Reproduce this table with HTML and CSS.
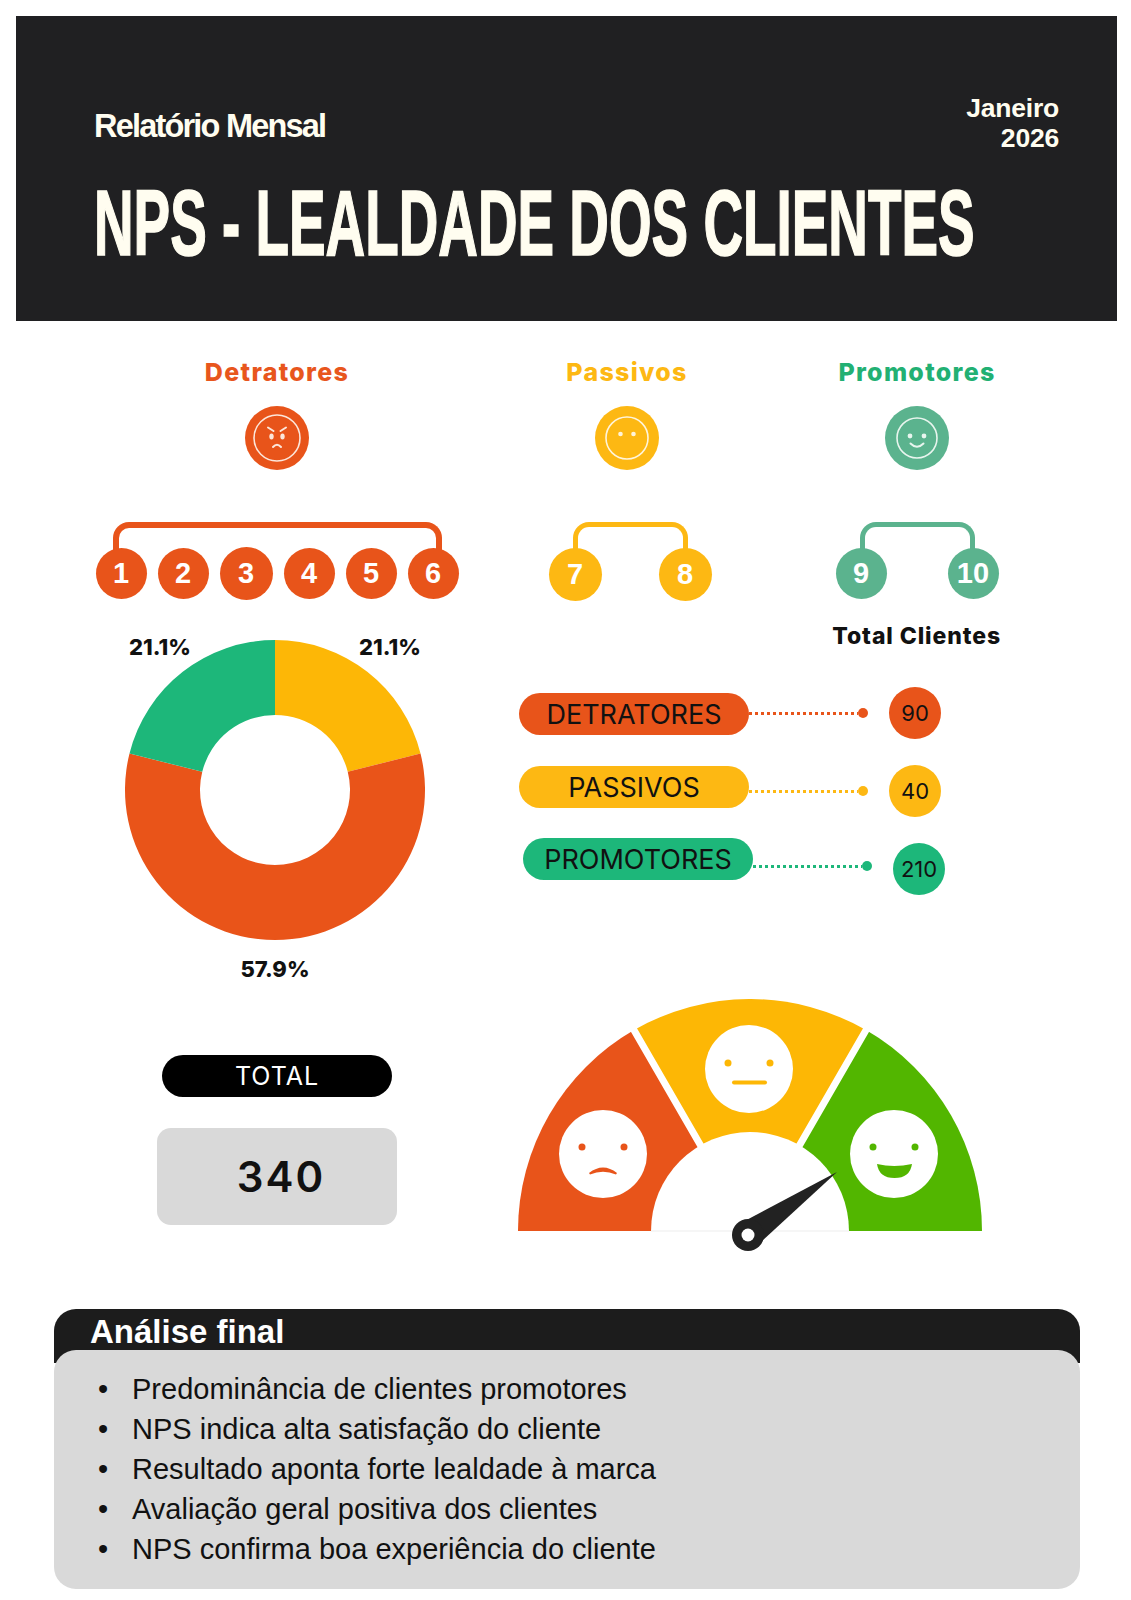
FILE: index.html
```html
<!DOCTYPE html>
<html lang="pt">
<head>
<meta charset="utf-8">
<title>NPS - Lealdade dos Clientes</title>
<link rel="stylesheet" href="styles.css">
</head>
<body>
<div class="page">
  <header class="hero">
    <div class="hero-top">
      <div class="kicker">Relatório Mensal</div>
      <div class="date"><div>Janeiro</div><div>2026</div></div>
    </div>
    <h1 class="title"><span>NPS - LEALDADE DOS CLIENTES</span></h1>
  </header>

  <section class="groups">
    <div class="group g-det">
      <h2 class="g-title">Detratores</h2>
      <svg class="face-icon" viewBox="0 0 64 64" width="64" height="64">
        <circle cx="32" cy="32" r="32" fill="#E8541A"/>
        <circle cx="32" cy="32" r="23" fill="none" stroke="#FCE6DA" stroke-width="1.6"/>
        <path d="M23 21.5 L28.5 25 M41 21.5 L35.5 25" stroke="#FCE6DA" stroke-width="2" stroke-linecap="round"/>
        <ellipse cx="26.5" cy="30.5" rx="2.2" ry="3" fill="#FCE6DA"/>
        <ellipse cx="37.5" cy="30.5" rx="2.2" ry="3" fill="#FCE6DA"/>
        <path d="M28 41 Q32 36.5 36 41" fill="none" stroke="#FCE6DA" stroke-width="2" stroke-linecap="round"/>
      </svg>
      <div class="scale">
        <div class="bracket b-det"></div>
        <div class="nums n-det">
          <span class="num">1</span><span class="num">2</span><span class="num">3</span><span class="num">4</span><span class="num">5</span><span class="num">6</span>
        </div>
      </div>
    </div>

    <div class="group g-pas">
      <h2 class="g-title">Passivos</h2>
      <svg class="face-icon" viewBox="0 0 64 64" width="64" height="64">
        <circle cx="32" cy="32" r="32" fill="#FDB813"/>
        <circle cx="32" cy="32" r="21" fill="none" stroke="#FFF4DA" stroke-width="1.6"/>
        <circle cx="25.5" cy="28" r="2.3" fill="#FFF4DA"/>
        <circle cx="38.5" cy="28" r="2.3" fill="#FFF4DA"/>
      </svg>
      <div class="scale">
        <div class="bracket b-pas"></div>
        <div class="nums n-pas">
          <span class="num">7</span><span class="num">8</span>
        </div>
      </div>
    </div>

    <div class="group g-pro">
      <h2 class="g-title">Promotores</h2>
      <svg class="face-icon" viewBox="0 0 64 64" width="64" height="64">
        <circle cx="32" cy="32" r="32" fill="#5BB38E"/>
        <circle cx="32" cy="32" r="20" fill="none" stroke="#E8F5EE" stroke-width="1.6"/>
        <circle cx="25" cy="30" r="2.4" fill="#E8F5EE"/>
        <circle cx="39" cy="30" r="2.4" fill="#E8F5EE"/>
        <path d="M25.5 37.5 Q32 44 38.5 37.5" fill="none" stroke="#E8F5EE" stroke-width="2" stroke-linecap="round"/>
      </svg>
      <div class="scale">
        <div class="bracket b-pro"></div>
        <div class="nums n-pro">
          <span class="num">9</span><span class="num">10</span>
        </div>
      </div>
    </div>
  </section>

  <section class="stats">
    <div class="donut-wrap">
      <svg class="donut" viewBox="0 0 300 300" width="300" height="300">
        <path d="M150,0 A150,150 0 0 1 295.5,113.53 L222.75,131.77 A75,75 0 0 0 150,75 Z" fill="#FDB706"/>
        <path d="M295.5,113.53 A150,150 0 1 1 4.5,113.53 L77.25,131.77 A75,75 0 1 0 222.75,131.77 Z" fill="#E95419"/>
        <path d="M4.5,113.53 A150,150 0 0 1 150,0 L150,75 A75,75 0 0 0 77.25,131.77 Z" fill="#1DB77A"/>
      </svg>
      <span class="pct pct-l">21.1%</span>
      <span class="pct pct-r">21.1%</span>
      <span class="pct pct-b">57.9%</span>
    </div>

    <div class="legend">
      <div class="legend-head">Total Clientes</div>
      <div class="legend-row det">
        <span class="pill">DETRATORES</span>
        <span class="conn"></span>
        <span class="val">90</span>
      </div>
      <div class="legend-row pas">
        <span class="pill">PASSIVOS</span>
        <span class="conn"></span>
        <span class="val">40</span>
      </div>
      <div class="legend-row pro">
        <span class="pill">PROMOTORES</span>
        <span class="conn"></span>
        <span class="val">210</span>
      </div>
    </div>
  </section>

  <section class="summary">
    <div class="total">
      <div class="total-pill">TOTAL</div>
      <div class="total-box">340</div>
    </div>
    <div class="gauge">
      <svg viewBox="0 0 470 256" width="470" height="256">
        <path d="M235,232 L3,232 A232,232 0 0 1 119,31.08 Z" fill="#E8541A"/>
        <path d="M235,232 L119,31.08 A232,232 0 0 1 351,31.08 Z" fill="#FDB705"/>
        <path d="M235,232 L351,31.08 A232,232 0 0 1 467,232 Z" fill="#52B600"/>
        <path d="M235,232 L113,20.7 M235,232 L357,20.7" stroke="#fff" stroke-width="7"/>
        <path d="M136,232 A99,99 0 0 1 334,232 Z" fill="#fff"/>
        <line x1="136" y1="232" x2="334" y2="232" stroke="#EDEDED" stroke-width="1"/>

        <g transform="translate(88 155)">
          <circle r="44" fill="#fff"/>
          <circle cx="-21" cy="-7" r="3.5" fill="#E8541A"/>
          <circle cx="21" cy="-7" r="3.5" fill="#E8541A"/>
          <path d="M-14,19 Q0,8 14,19 L13,20.5 Q0,15 -13,20.5 Z" fill="#E8541A"/>
        </g>
        <g transform="translate(234 70)">
          <circle r="44" fill="#fff"/>
          <circle cx="-21" cy="-6" r="3.5" fill="#FDB705"/>
          <circle cx="21" cy="-6" r="3.5" fill="#FDB705"/>
          <rect x="-17" y="11.5" width="35" height="4" rx="2" fill="#FDB705"/>
        </g>
        <g transform="translate(379 155)">
          <circle r="44" fill="#fff"/>
          <circle cx="-21" cy="-7" r="3.5" fill="#52B600"/>
          <circle cx="21" cy="-7" r="3.5" fill="#52B600"/>
          <path d="M-17,10 Q0,14 18,10 Q16,24 0.5,24 Q-15,24 -17,10 Z" fill="#52B600"/>
        </g>

        <path d="M224.9,224.6 L322,173 L241.1,247.4 Z" fill="#222"/>
        <circle cx="233" cy="236" r="16" fill="#222"/>
        <circle cx="233" cy="236" r="6.5" fill="#fff"/>
      </svg>
    </div>
  </section>

  <section class="analysis">
    <div class="analysis-head">Análise final</div>
    <ul class="analysis-body">
      <li>Predominância de clientes promotores</li>
      <li>NPS indica alta satisfação do cliente</li>
      <li>Resultado aponta forte lealdade à marca</li>
      <li>Avaliação geral positiva dos clientes</li>
      <li>NPS confirma boa experiência do cliente</li>
    </ul>
  </section>
</div>
</body>
</html>
```

FILE: styles.css
```css
* { box-sizing: border-box; }

body {
  margin: 0;
  background: #ffffff;
  font-family: Inter, "Liberation Sans", sans-serif;
  color: #111111;
}

.page {
  width: 1131px;
}

/* ---------- header ---------- */
.hero {
  margin: 16px 0 0 16px;
  width: 1101px;
  height: 305px;
  background: #202022;
  padding: 79px 58px 0 78px;
  overflow: hidden;
  color: #FFFDF0;
}

.hero-top {
  display: flex;
  justify-content: space-between;
  align-items: flex-start;
}

.kicker {
  margin-top: 15px;
  font: 700 32.5px/32px "Liberation Sans", Arial, sans-serif;
  letter-spacing: -1.8px;
}

.date {
  margin-top: -1px;
  font: 700 26.5px/29.8px "Liberation Sans", Arial, sans-serif;
  letter-spacing: -0.2px;
  text-align: right;
}

.title {
  margin: 22px 0 0;
  font: 700 93.6px/94px "Liberation Sans", Arial, sans-serif;
  white-space: nowrap;
}

.title span {
  display: inline-block;
  transform: scaleX(0.586);
  transform-origin: left center;
  -webkit-text-stroke: 1.6px #FFFDF0;
}

/* ---------- groups ---------- */
.groups {
  display: flex;
  margin-top: 36px;
  padding-left: 77px;
}

.group {
  display: flex;
  flex-direction: column;
  align-items: center;
}

.g-det { width: 400px; }
.g-pas { width: 220px; margin-left: 40px; }
.g-pro { width: 220px; margin-left: 70px; }

.g-title {
  margin: 0;
  font: 800 25px/30px Inter, sans-serif;
  letter-spacing: 1.3px;
}

.g-det .g-title { color: #E8561D; }
.g-pas .g-title { color: #FDB813; }
.g-pro .g-title { color: #22B073; }

.face-icon {
  display: block;
  margin-top: 19px;
}

.scale {
  margin-top: 52px;
  display: flex;
  flex-direction: column;
  align-items: center;
}

.bracket {
  height: 35px;
  border-style: solid;
  border-width: 5px 5px 0 5px;
  border-radius: 16px 16px 0 0;
}

.b-det { width: 329px; border-width: 6px 6px 0 6px; border-color: #E8541A; }
.b-pas { width: 115px; border-color: #FDB813; margin-left: 6px; }
.b-pro { width: 115px; border-color: #5BB38E; }

.nums {
  display: flex;
  margin-top: -9px;
}

.n-det { gap: 11px; }
.n-pas { gap: 57px; margin-left: 6px; }
.n-pro { gap: 61px; }

.num {
  width: 51px;
  height: 51px;
  border-radius: 50%;
  display: flex;
  align-items: center;
  justify-content: center;
  color: #ffffff;
  font: 700 29px/1 "Liberation Sans", Arial, sans-serif;
}

.n-det .num { background: #E8541A; }
.n-det .num:nth-child(3) { width: 53px; height: 53px; margin-top: -1px; }
.n-pas .num { background: #FDB813; width: 53px; height: 53px; }
.n-pro .num { background: #5BB38E; }

/* ---------- stats ---------- */
.stats {
  display: flex;
  margin-top: 21px;
  padding-left: 77px;
}

.donut-wrap {
  position: relative;
  width: 396px;
  height: 360px;
  padding-top: 18px;
}

.donut {
  display: block;
  margin: 0 auto;
}

.pct {
  position: absolute;
  transform: translate(-50%, -50%);
  font: 800 22px/1 Inter, sans-serif;
  color: #111111;
  white-space: nowrap;
}

.pct-l { left: 83px; top: 25px; }
.pct-r { left: 313px; top: 25px; }
.pct-b { left: 198px; top: 347px; }

.legend {
  margin-left: 46px;
  width: 482px;
  display: flex;
  flex-direction: column;
}

.legend-head {
  align-self: flex-end;
  font: 800 23px/28px Inter, sans-serif;
  letter-spacing: 0.9px;
  color: #111111;
}

.legend-row {
  display: flex;
  align-items: center;
  height: 52px;
}

.legend-row.det { margin-top: 37px; }
.legend-row.pas { margin-top: 26px; }
.legend-row.pro { margin-top: 26px; margin-left: 4px; }

.det .pill { margin-top: 2px; }
.pas .pill { margin-top: -8px; }
.pro .pill { margin-top: -20px; }

.pill {
  width: 230px;
  height: 42px;
  border-radius: 21px;
  display: flex;
  align-items: center;
  justify-content: center;
  font: 400 27px/1 Inter, sans-serif;
  color: #111111;
}

.conn {
  width: 119px;
  height: 10px;
  display: flex;
  align-items: center;
}

.pro .conn { margin-top: -6px; }

.conn::before {
  content: "";
  flex: 1;
  height: 3px;
  background: repeating-linear-gradient(90deg, currentColor 0 3px, transparent 3px 6px);
}

.conn::after {
  content: "";
  width: 10px;
  height: 10px;
  border-radius: 50%;
  background: currentColor;
}

.val {
  width: 52px;
  height: 52px;
  margin-left: 21px;
  border-radius: 50%;
  display: flex;
  align-items: center;
  justify-content: center;
  font: 400 22px/1 Inter, sans-serif;
  color: #111111;
}

.det .pill, .det .val { background: #E8541A; }
.det .conn { color: #E8541A; }
.pas .pill, .pas .val { background: #FDB813; }
.pas .conn { color: #FDB813; }
.pro .pill, .pro .val { background: #1DB77A; }
.pro .conn { color: #1DB77A; }

/* ---------- summary ---------- */
.summary {
  display: flex;
  margin-top: 17px;
  padding-left: 77px;
}

.total {
  width: 400px;
  display: flex;
  flex-direction: column;
  align-items: center;
  padding-top: 56px;
}

.total-pill {
  width: 230px;
  height: 42px;
  border-radius: 21px;
  background: #000000;
  color: #ffffff;
  display: flex;
  align-items: center;
  justify-content: center;
  font: 400 25px/1 Inter, sans-serif;
  letter-spacing: 1px;
}

.total-box {
  margin-top: 31px;
  width: 240px;
  height: 97px;
  border-radius: 14px;
  background: #D9D9D9;
  display: flex;
  align-items: center;
  justify-content: center;
  font: 600 42px/1 Inter, sans-serif;
  letter-spacing: 2px;
  color: #111111;
  padding-left: 8px;
}

.gauge {
  margin-left: 38px;
}

.gauge svg {
  display: block;
}

/* ---------- analysis ---------- */
.analysis {
  margin: 54px 51px 0 54px;
}

.analysis-head {
  height: 54px;
  background: #1C1C1C;
  border-radius: 22px 22px 0 0;
  color: #ffffff;
  padding: 3px 36px 0;
  font: 700 33px/40px "Liberation Sans", Arial, sans-serif;
}

.analysis-body {
  margin: -13px 0 0;
  background: #D9D9D9;
  border-radius: 22px;
  padding: 19px 0 20px 44px;
  list-style: none;
  font: 400 29px/40px "Liberation Sans", Arial, sans-serif;
  color: #111111;
}

.analysis-body li::before {
  content: "\2022";
  display: inline-block;
  width: 34px;
}
```
